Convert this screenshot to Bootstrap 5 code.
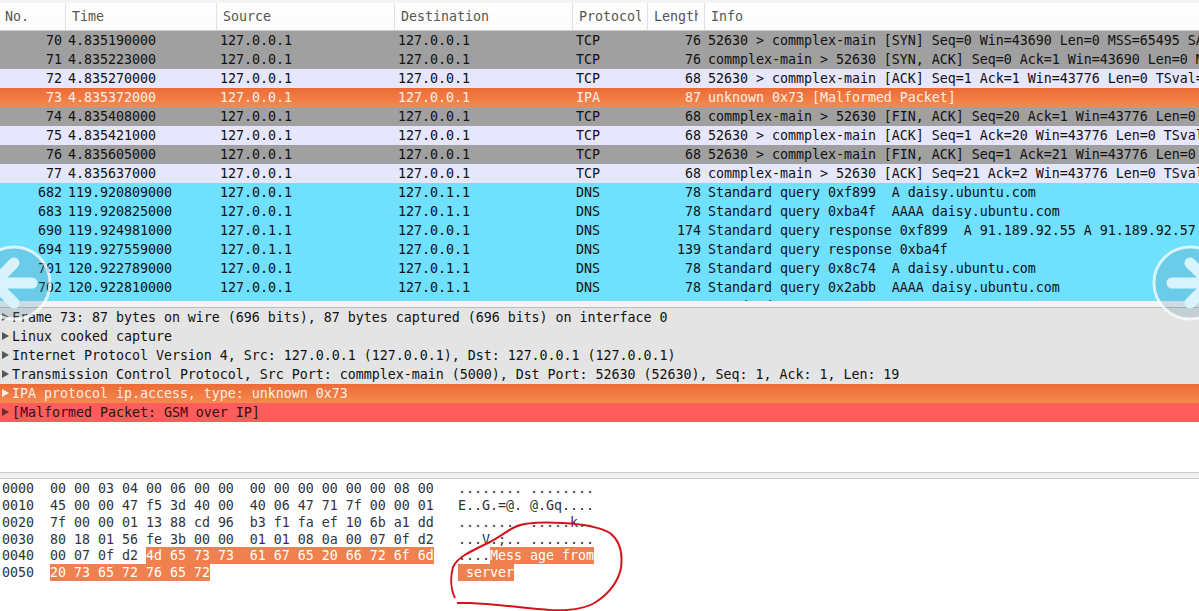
<!DOCTYPE html><html lang="en">
<head>
  <meta charset="UTF-8" />
  <title>Wireshark capture</title>
  <link href="https://cdn.jsdelivr.net/npm/bootstrap@5.3.0/dist/css/bootstrap.min.css" rel="stylesheet">
  <style>
    body { background: #fff; color: #111; font: 13.33px/19px "DejaVu Sans Mono", monospace; letter-spacing: -0.03px; overflow: hidden; height: 611px; position: relative; }
    .pk-head { height: 31px; padding-top: 3px; background: linear-gradient(#f4f4f4 0 3px, #fff 3px, #fbfbfb); border-bottom: 1px solid #ccc; color: #555; line-height: 27px; }
    .pk-head > div { border-right: 1px solid #e2e2e2; padding-left: 6px; white-space: pre; }
    .pk-head > div:first-child { padding-left: 5px; }
    .pk-head > div:last-child { border-right: 0; }
    .pk-lab { overflow: hidden; margin-right: 6px; }
    .pk-list { height: 270px; overflow: hidden; }
    .pk-row { height: 19px; white-space: pre; }
    .c-no { width: 66px; flex: none; }
    .c-time { width: 151px; flex: none; }
    .c-src { width: 178px; flex: none; }
    .c-dst { width: 178px; flex: none; }
    .c-proto { width: 75px; flex: none; }
    .c-len { width: 57px; flex: none; }
    .pk-row .c-no { width: 65px; text-align: right; padding-right: 3px; }
    .pk-row .c-time { width: 151px; padding-left: 3px; }
    .pk-row .c-src, .pk-row .c-dst { padding-left: 4px; }
    .pk-row .c-proto { padding-left: 4px; }
    .pk-row .c-len { text-align: right; padding-right: 3px; }
    .pk-row .c-info { padding-left: 4px; }
    .r-gray { background: #a0a0a0; }
    .r-tcp { background: #e6e6fc; }
    .r-dns { background: #70e0ff; }
    .r-bad { background: linear-gradient(#ec6a35, #f58a50); color: #fdeee6; }
    .pk-gap { height: 7px; background: #f4f4f4; border-bottom: 1px solid #bbb; }
    .dt-row { height: 19px; background: #e4e4e4; white-space: pre; padding-left: 12px; position: relative; }
    .dt-row::before { content: ""; position: absolute; left: 2px; top: 5px; border-left: 7px solid #555; border-top: 4px solid transparent; border-bottom: 4px solid transparent; }
    .dt-orange { background: linear-gradient(#ec6a35, #f58a50); color: #fdeee6; }
    .dt-orange::before { border-left-color: #fdeee6; }
    .dt-red { background: #ff5c5c; color: #301010; }
    .dt-red::before { border-left-color: #6a2c2c; }
    .dt-space { height: 50px; }
    .hx-bar { height: 7px; background: #f0f0f0; border-top: 1px solid #ccc; border-bottom: 1px solid #ccc; }
    .hx-row { height: 17px; line-height: 19px; white-space: pre; padding-left: 2px; color: #333; }
    .hx-sel { line-height: 17px; }
    .hx-off { width: 48px; flex: none; }
    .hx-bytes { width: 408px; flex: none; }
    .hx-on { display: inline-block; height: 17px; background: #f08050; color: #fff; vertical-align: top; }
    .nav-arrow { position: absolute; top: 245px; width: 76px; height: 76px; }
    .nav-left { left: -24px; }
    .nav-right { left: 1152px; }
    .scribble { position: absolute; left: 0; top: 0; width: 1199px; height: 611px; pointer-events: none; }
  </style>
</head>
<body>
  <div class="pk-head d-flex">
    <div class="c-no"><div class="pk-lab">No.</div></div>
    <div class="c-time"><div class="pk-lab">Time</div></div>
    <div class="c-src"><div class="pk-lab">Source</div></div>
    <div class="c-dst"><div class="pk-lab">Destination</div></div>
    <div class="c-proto"><div class="pk-lab">Protocol</div></div>
    <div class="c-len"><div class="pk-lab">Length</div></div>
    <div class="flex-grow-1"><div class="pk-lab">Info</div></div>
  </div>
  <div class="pk-list" id="packets"></div>
  <div class="pk-gap"></div>

  <div>
    <div class="dt-row">Frame 73: 87 bytes on wire (696 bits), 87 bytes captured (696 bits) on interface 0</div>
    <div class="dt-row">Linux cooked capture</div>
    <div class="dt-row">Internet Protocol Version 4, Src: 127.0.0.1 (127.0.0.1), Dst: 127.0.0.1 (127.0.0.1)</div>
    <div class="dt-row">Transmission Control Protocol, Src Port: commplex-main (5000), Dst Port: 52630 (52630), Seq: 1, Ack: 1, Len: 19</div>
    <div class="dt-row dt-orange">IPA protocol ip.access, type: unknown 0x73</div>
    <div class="dt-row dt-red">[Malformed Packet: GSM over IP]</div>
  </div>
  <div class="dt-space"></div>
  <div class="hx-bar"></div>

  <div id="hex"></div>

  <svg class="nav-arrow nav-left" viewBox="0 0 76 76">
    <circle cx="38" cy="38" r="36" fill="#5a90a8" fill-opacity=".25" stroke="#fff" stroke-opacity=".75" stroke-width="3"/>
    <path d="M56 38H20M38 18L18 38L38 58" fill="none" stroke="#d8f3fc" stroke-width="11" stroke-linecap="round" stroke-linejoin="round"/>
  </svg>
  <svg class="nav-arrow nav-right" viewBox="0 0 76 76">
    <circle cx="38" cy="38" r="36" fill="#5a90a8" fill-opacity=".25" stroke="#fff" stroke-opacity=".75" stroke-width="3"/>
    <path d="M20 38H56M38 18L58 38L38 58" fill="none" stroke="#d8f3fc" stroke-width="11" stroke-linecap="round" stroke-linejoin="round"/>
  </svg>

  <svg class="scribble" viewBox="0 0 1199 611">
    <path d="M455 598C451 590 450 578 453 567C457 558 467 553 490 542C498 538 505 532 515 527C525 522 545 522 563 523C580 524 600 527 610 533C620 541 623 553 621 568C618 582 608 594 596 602C585 609 570 611 550 610C525 608 495 604 470 603L457 603" fill="none" stroke="#d3131c" stroke-width="2"/>
  </svg>

  <script src="https://cdn.jsdelivr.net/npm/bootstrap@5.3.0/dist/js/bootstrap.bundle.min.js"></script>
  <script>
    const L0 = '127.0.0.1', L1 = '127.0.1.1';
    const packets = [
      ['r-gray', 70, '4.835190000', L0, L0, 'TCP', 76, '52630 > commplex-main [SYN] Seq=0 Win=43690 Len=0 MSS=65495 SACK_PERM=1'],
      ['r-gray', 71, '4.835223000', L0, L0, 'TCP', 76, 'commplex-main > 52630 [SYN, ACK] Seq=0 Ack=1 Win=43690 Len=0 MSS=65495'],
      ['r-tcp', 72, '4.835270000', L0, L0, 'TCP', 68, '52630 > commplex-main [ACK] Seq=1 Ack=1 Win=43776 Len=0 TSval=1234'],
      ['r-bad', 73, '4.835372000', L0, L0, 'IPA', 87, 'unknown 0x73 [Malformed Packet]'],
      ['r-gray', 74, '4.835408000', L0, L0, 'TCP', 68, 'commplex-main > 52630 [FIN, ACK] Seq=20 Ack=1 Win=43776 Len=0 TSval=1234'],
      ['r-tcp', 75, '4.835421000', L0, L0, 'TCP', 68, '52630 > commplex-main [ACK] Seq=1 Ack=20 Win=43776 Len=0 TSval=1234'],
      ['r-gray', 76, '4.835605000', L0, L0, 'TCP', 68, '52630 > commplex-main [FIN, ACK] Seq=1 Ack=21 Win=43776 Len=0 TSval=1234'],
      ['r-tcp', 77, '4.835637000', L0, L0, 'TCP', 68, 'commplex-main > 52630 [ACK] Seq=21 Ack=2 Win=43776 Len=0 TSval=1234'],
      ['r-dns', 682, '119.920809000', L0, L1, 'DNS', 78, 'Standard query 0xf899  A daisy.ubuntu.com'],
      ['r-dns', 683, '119.920825000', L0, L1, 'DNS', 78, 'Standard query 0xba4f  AAAA daisy.ubuntu.com'],
      ['r-dns', 690, '119.924981000', L1, L0, 'DNS', 174, 'Standard query response 0xf899  A 91.189.92.55 A 91.189.92.57'],
      ['r-dns', 694, '119.927559000', L1, L0, 'DNS', 139, 'Standard query response 0xba4f'],
      ['r-dns', 701, '120.922789000', L0, L1, 'DNS', 78, 'Standard query 0x8c74  A daisy.ubuntu.com'],
      ['r-dns', 702, '120.922810000', L0, L1, 'DNS', 78, 'Standard query 0x2abb  AAAA daisy.ubuntu.com'],
      ['r-dns', 705, '120.925114000', L1, L0, 'DNS', 174, 'Standard query response 0x8c74']
    ];
    document.getElementById('packets').innerHTML = packets.map(p => `
      <div class="pk-row d-flex ${p[0]}">
        <div class="c-no">${p[1]}</div>
        <div class="c-time">${p[2]}</div>
        <div class="c-src">${p[3]}</div>
        <div class="c-dst">${p[4]}</div>
        <div class="c-proto">${p[5]}</div>
        <div class="c-len">${p[6]}</div>
        <div class="c-info">${p[7].replace(/>/g, '&gt;')}</div>
      </div>`).join('');

    const hexRows = [
      ['0000', '00 00 03 04 00 06 00 00  00 00 00 00 00 00 08 00', '........ ........', ''],
      ['0010', '45 00 00 47 f5 3d 40 00  40 06 47 71 7f 00 00 01', 'E..G.=@. @.Gq....', ''],
      ['0020', '7f 00 00 01 13 88 cd 96  b3 f1 fa ef 10 6b a1 dd', '........ .....k..', ''],
      ['0030', '80 18 01 56 fe 3b 00 00  01 01 08 0a 00 07 0f d2', '...V.;.. ........', ''],
      ['0040', '00 07 0f d2 <span class="hx-on">4d 65 73 73  61 67 65 20 66 72 6f 6d</span>', '....<span class="hx-on">Mess age from</span>', 'hx-sel'],
      ['0050', '<span class="hx-on">20 73 65 72 76 65 72</span>', '<span class="hx-on"> server</span>', 'hx-sel']
    ];
    document.getElementById('hex').innerHTML = hexRows.map(r => `
      <div class="hx-row d-flex ${r[3]}">
        <div class="hx-off">${r[0]}</div>
        <div class="hx-bytes">${r[1]}</div>
        <div>${r[2]}</div>
      </div>`).join('');
  </script>
</body>
</html>
